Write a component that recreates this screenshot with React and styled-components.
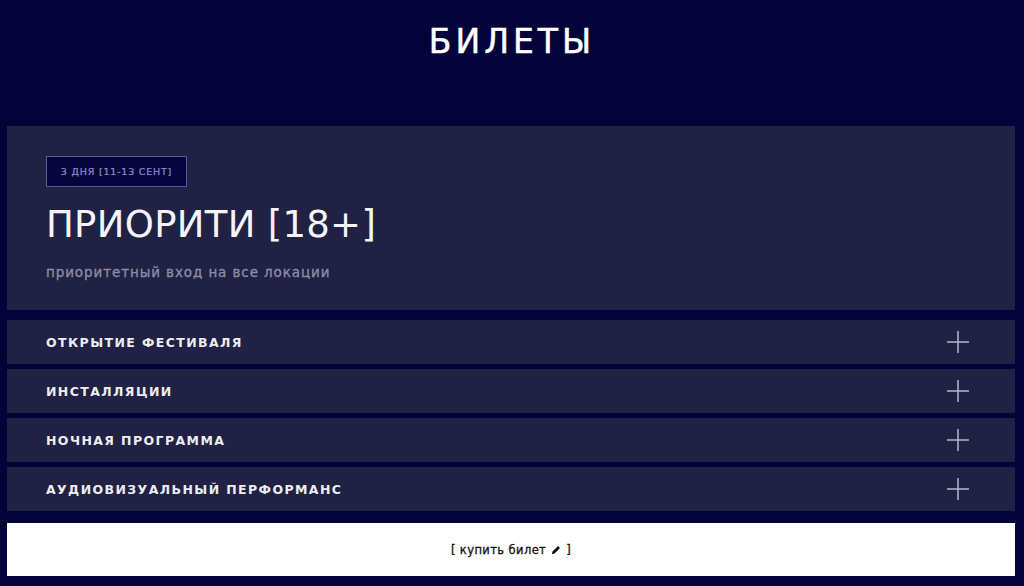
import styled, { createGlobalStyle } from "styled-components"

const GlobalStyle = createGlobalStyle`
    * {
        box-sizing: border-box;
    }
    body {
        margin: 0;
        background-color: #03033a;
        font-family: "DejaVu Sans", "Liberation Sans", sans-serif;
    }
`

const options = [
    "открытие фестиваля",
    "инсталляции",
    "ночная программа",
    "аудиовизуальный перформанс",
]

export default function App () {

    return(
        <>
            <GlobalStyle />
            <Page>
                <Heading>Билеты</Heading>
                <Container>
                    <TicketCard>
                        <Badge>3 дня [11-13 сент]</Badge>
                        <Title>ПРИОРИТИ [18+]</Title>
                        <SubTitle>приоритетный вход на все локации</SubTitle>
                    </TicketCard>

                    {options.map(option => (
                        <OptionRow key={option}>
                            <OptionTitle>{option}</OptionTitle>
                            <PlusIcon viewBox="0 0 22 22">
                                <path d="M11 0V22M0 11H22" />
                            </PlusIcon>
                        </OptionRow>
                    ))}

                    <BuyButton>
                        [ купить билет
                        {/* pencil */}
                        <PenIcon viewBox="0 0 10 10">
                            <path d="M0.8 9.2L1.6 6.4L7 1L9 3L3.6 8.4Z" />
                        </PenIcon>
                        ]
                    </BuyButton>
                </Container>
            </Page>
        </>
    )
}

const Page = styled.div`
    width: 1024px;
    min-height: 586px;
    padding: 0 9px 10px 7px;
    background-color: #03033a;
`
const Heading = styled.h1`
    margin: 0;
    height: 126px;
    padding-top: 22px;
    padding-left: 2px;
    text-align: center;
    text-transform: uppercase;
    font-size: 33px;
    font-weight: 400;
    letter-spacing: 4px;
    line-height: 40px;
    color: #ffffff;
    -webkit-text-stroke: 0.5px #ffffff;
`
const Container = styled.div`
    display: flex;
    flex-direction: column;
    row-gap: 5px;
`
const TicketCard = styled.div`
    display: flex;
    flex-direction: column;
    align-items: flex-start;
    height: 184px;
    padding: 30px 39px 0 39px;
    margin-bottom: 5px;
    background-color: #212143;
`
const Badge = styled.div`
    display: flex;
    align-items: center;
    justify-content: center;
    width: 141px;
    height: 31px;
    border: 1px solid #5c5c9c;
    background-color: #05053c;
    color: #8f8fd6;
    font-size: 9.5px;
    letter-spacing: 0.8px;
    text-transform: uppercase;
    -webkit-text-stroke: 0.2px #8f8fd6;
`
const Title = styled.div`
    margin-top: 16px;
    font-size: 37px;
    line-height: 44px;
    letter-spacing: 0.3px;
    color: #f4f4f8;
`
const SubTitle = styled.div`
    margin-top: 17px;
    font-size: 13.5px;
    letter-spacing: 0.9px;
    color: #8d8da8;
    -webkit-text-stroke: 0.3px #8d8da8;
`
const OptionRow = styled.div`
    display: flex;
    align-items: center;
    justify-content: space-between;
    height: 44px;
    padding: 0 46px 0 39px;
    background-color: #212143;
`
const OptionTitle = styled.div`
    font-size: 12.5px;
    font-weight: 700;
    letter-spacing: 1.4px;
    text-transform: uppercase;
    color: #ececf4;
`
const PlusIcon = styled.svg`
    width: 22px;
    height: 22px;
    path {
        stroke: #b4b4d4;
        stroke-width: 1.5;
        fill: none;
    }
`
const BuyButton = styled.div`
    display: flex;
    align-items: center;
    justify-content: center;
    column-gap: 5px;
    height: 53px;
    margin-top: 7px;
    background-color: #ffffff;
    color: #111111;
    font-size: 11.5px;
    letter-spacing: 0.4px;
    -webkit-text-stroke: 0.3px #111111;
    cursor: pointer;
`
const PenIcon = styled.svg`
    width: 10px;
    height: 10px;
    path {
        fill: #111111;
    }
`
